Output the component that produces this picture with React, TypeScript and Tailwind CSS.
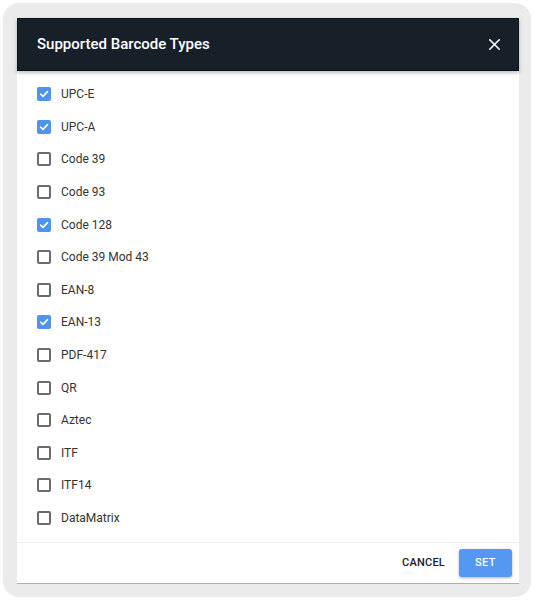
import { X } from 'lucide-react'

const types = [
  { name: 'UPC-E', on: true },
  { name: 'UPC-A', on: true },
  { name: 'Code 39', on: false },
  { name: 'Code 93', on: false },
  { name: 'Code 128', on: true },
  { name: 'Code 39 Mod 43', on: false },
  { name: 'EAN-8', on: false },
  { name: 'EAN-13', on: true },
  { name: 'PDF-417', on: false },
  { name: 'QR', on: false },
  { name: 'Aztec', on: false },
  { name: 'ITF', on: false },
  { name: 'ITF14', on: false },
  { name: 'DataMatrix', on: false },
]

const Box = ({ on }: { on: boolean }) =>
  on ? (
    <span className="flex h-[14px] w-[14px] items-center justify-center rounded-[2px] bg-[#4f93ec]">
      <svg width="10" height="10" viewBox="0 0 10 10" fill="none">
        <path d="M1.6 5.2 L4 7.4 L8.5 2.6" stroke="white" strokeWidth="1.6" strokeLinecap="round" strokeLinejoin="round" />
      </svg>
    </span>
  ) : (
    <span className="h-[14px] w-[14px] rounded-[2px] border-2 border-[#6b6b6b]" />
  )

export default function App() {
  return (
    <div className="h-[600px] w-[534px] bg-white p-[3px] font-['Roboto',sans-serif]">
      <div className="h-full rounded-[16px] bg-[#ebebeb] pl-[14px] pr-[12px] pt-[15px] pb-[14px]">
        <div className="flex h-[566px] flex-col border-b border-[#b0b0b0] bg-white">
          <div className="flex h-[53px] items-center justify-between border border-[#0d1216] bg-[#172028] pl-[19px] pr-[14px] shadow-[0_2px_4px_rgba(0,0,0,0.25)]">
            <h1 className="text-[15px] font-medium text-white">Supported Barcode Types</h1>
            <X size={19} strokeWidth={2} className="text-white" />
          </div>
          <div className="flex-1 pt-[7px]">
            {types.map((t) => (
              <div key={t.name} className="flex h-[32.6px] items-center gap-[10px] pl-[20px]">
                <Box on={t.on} />
                <span className="text-[12px] text-[#333]">{t.name}</span>
              </div>
            ))}
          </div>
          <div className="flex h-[41px] items-center justify-end gap-[14px] border-t border-[#f0f0f0] pr-[7px]">
            <button className="text-[11px] font-medium tracking-[0.02em] text-[#222]">CANCEL</button>
            <button className="h-[28px] w-[53px] rounded-[3px] bg-[#5598f2] text-[11px] font-medium tracking-[0.04em] text-white shadow-[0_1px_3px_rgba(0,0,0,0.3)]">
              SET
            </button>
          </div>
        </div>
      </div>
    </div>
  )
}
